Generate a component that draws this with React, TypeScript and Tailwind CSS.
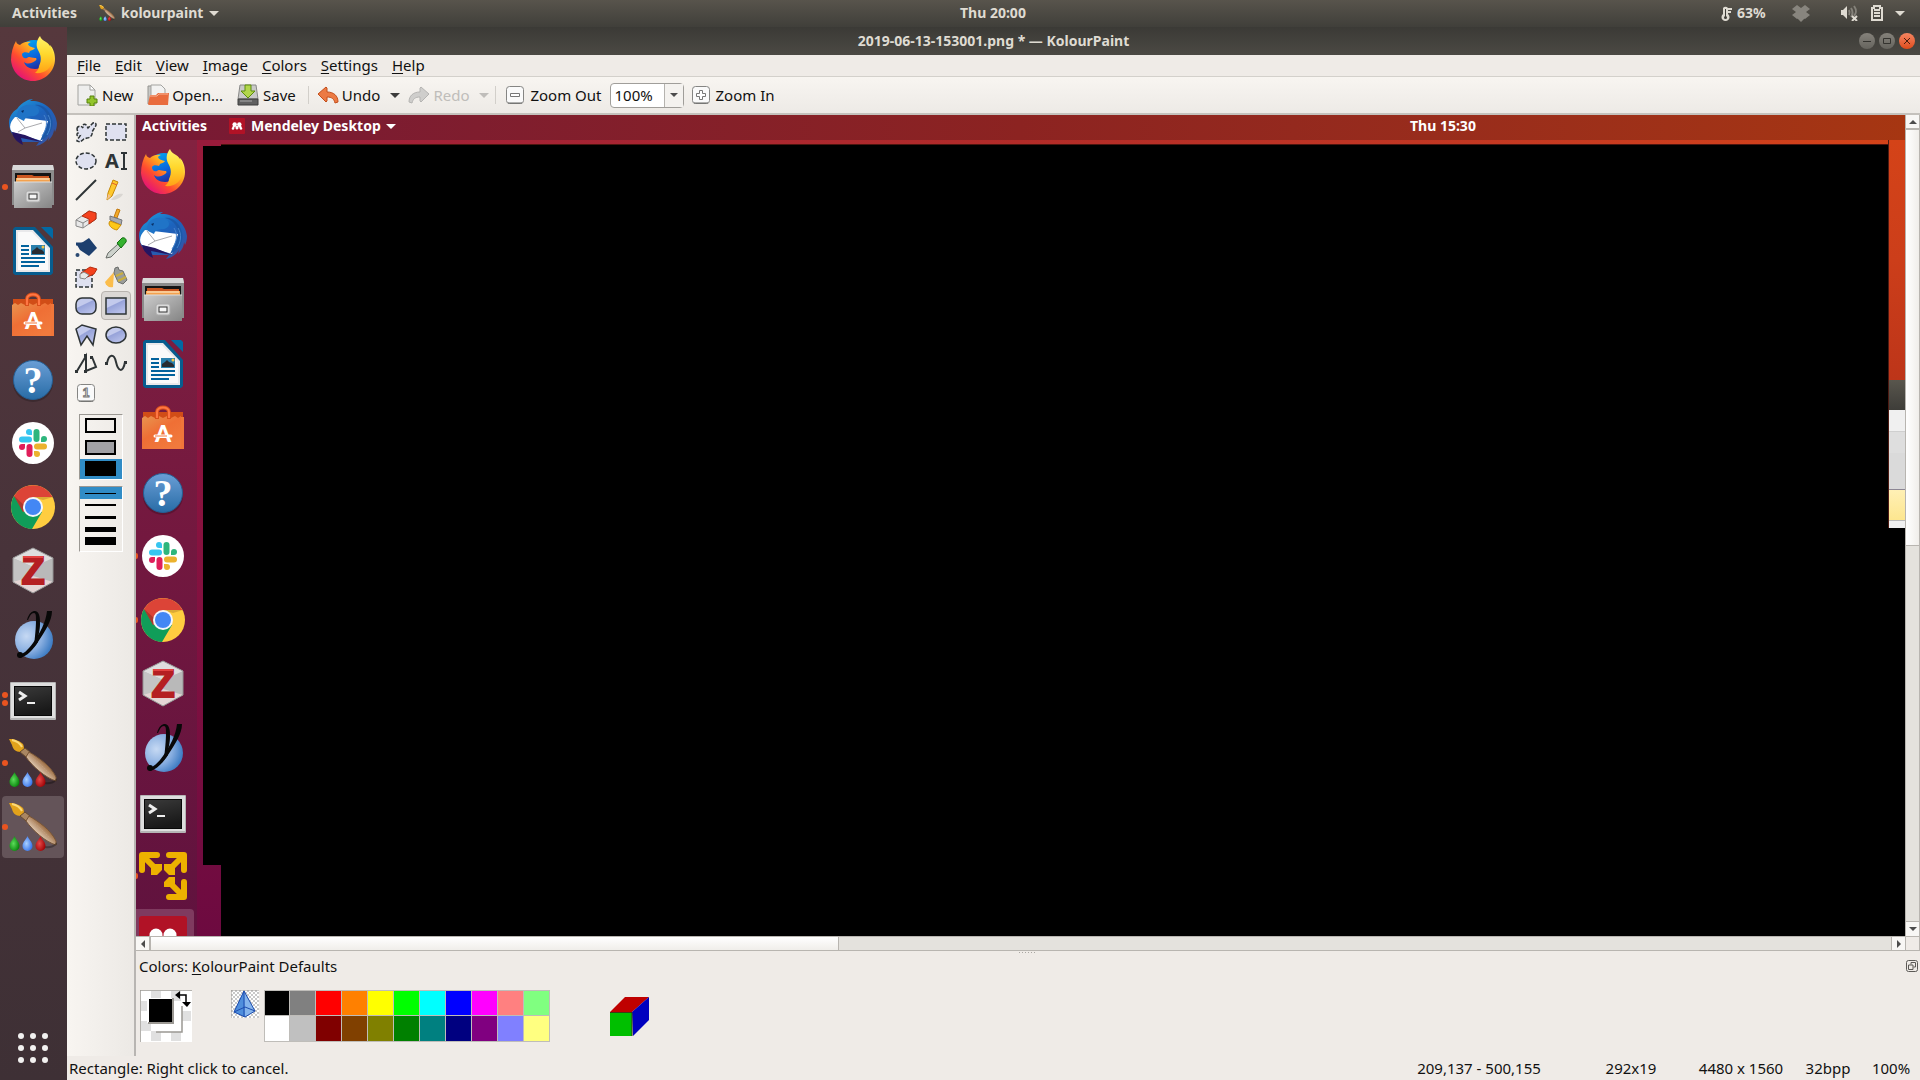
import React from 'react';

type IconProps = { className?: string };

const FirefoxIcon: React.FC<IconProps> = ({ className }) => (
  <svg viewBox="0 0 48 48" className={className}>
    <defs>
      <linearGradient id="ff-body" x1="0.85" y1="0.1" x2="0.15" y2="0.9">
        <stop offset="0" stopColor="#fff44f" />
        <stop offset="0.35" stopColor="#ffa51e" />
        <stop offset="0.65" stopColor="#ff4b30" />
        <stop offset="1" stopColor="#e3107a" />
      </linearGradient>
      <linearGradient id="ff-globe" x1="0" y1="0" x2="0.4" y2="1">
        <stop offset="0" stopColor="#00b3f4" />
        <stop offset="0.6" stopColor="#0a64dc" />
        <stop offset="1" stopColor="#28208f" />
      </linearGradient>
      <linearGradient id="ff-flame" x1="0" y1="0" x2="0" y2="1">
        <stop offset="0" stopColor="#fff36b" />
        <stop offset="0.5" stopColor="#ffd72c" />
        <stop offset="1" stopColor="#ffa116" />
      </linearGradient>
    </defs>
    <circle cx="25" cy="22" r="17" fill="url(#ff-globe)" />
    <path d="M7 6c-3 5-5 12-5 19 1 12 10 21 22 21s22-10 22-22c0-6-2-11-5-14 1 5 0 8-2 11 0 7-6 13-13 13-6 0-10-3-11-7 4 3 8 1 11-1 2-1 2-3 0-3-4 0-6-2-8 0-3 1-5-1-5-4 1-2 4-2 7-1l1-2c1-1 4-1 5-3-3-1-6-1-7-4 1-1 2-2 3-2-5-1-9 1-11 3-3-1-4-2-4-5z" fill="url(#ff-body)" />
    <path d="M31 1c-4 5-4 10-2 14 3 5 4 10 1 16 0 3-2 5-4 7 9 1 16-4 18-13 1-8-2-15-7-18-3-2-5-3-6-6z" fill="url(#ff-flame)" />
  </svg>
);

const ThunderbirdIcon: React.FC<IconProps> = ({ className }) => (
  <svg viewBox="0 0 48 48" className={className}>
    <defs>
      <linearGradient id="tb-wing" x1="0" y1="0" x2="0.7" y2="1">
        <stop offset="0" stopColor="#1fa0e0" />
        <stop offset="0.5" stopColor="#1c63bd" />
        <stop offset="1" stopColor="#3354a4" />
      </linearGradient>
    </defs>
    <path d="M8 10C13 3 20 0 24 0l-3 2c12-1 25 7 27 22 0 4-1 7-2 9l-1-3c0 5-3 9-6 12l1-4c-3 5-8 8-13 9l3-4H14C6 40 0 33 0 24c0-6 3-11 8-14z" fill="url(#tb-wing)" />
    <path d="M6 18 39 22 33 42 3 33C-1 28 2 22 6 18z" fill="#fff" />
    <path d="M3 33 16 36 33 43 12 39 14 46C8 43 4 39 3 33z" fill="#251561" />
    <path d="M8 19 16 29 33 24M16 29 9 33" fill="none" stroke="#a9a9ad" strokeWidth="1" />
    <path d="M8 17C8 9 16 3 26 7c7 3 4 10-2 10-4 0-8 1-9 5l-6-3z" fill="#2074c7" />
    <path d="M26 6c9 2 14 9 13 18l-8 18c10-5 14-13 12-22C40 10 33 5 26 6z" fill="#1b58a8" />
    <path d="M35 16c4 6 3 14-2 21M39 16c4 6 3 14-1 20" fill="none" stroke="#4684cd" strokeWidth="1" />
    <path d="m12 12 3-1-1 3z" fill="#082f65" />
  </svg>
);

const FilesIcon: React.FC<IconProps> = ({ className }) => (
  <svg viewBox="0 0 48 48" className={className}>
    <defs>
      <linearGradient id="files-front" x1="0" y1="0" x2="1" y2="1">
        <stop offset="0" stopColor="#cbcbcb" />
        <stop offset="1" stopColor="#858585" />
      </linearGradient>
    </defs>
    <path d="M4 2h40l1 4v36H3V6z" fill="#8c8c8c" />
    <path d="M4 2h40l1 5H3z" fill="#d9d9d9" />
    <path d="M6 10h36v10H6z" fill="#151515" />
    <path d="M8 12h15l2 1h15v6H8z" fill="#cb5720" />
    <path d="M7 15h34v5H7z" fill="#f3a14e" />
    <path d="M8 16h32" stroke="#fff3d9" strokeWidth="1" />
    <path d="M5 19h38v26H5z" fill="url(#files-front)" />
    <path d="M5 19h38" stroke="#dedede" />
    <rect x="17" y="28" width="14" height="11" rx="2" fill="#dadada" stroke="#aaa" />
    <rect x="20" y="31" width="8" height="5" fill="#f5f5f5" stroke="#333" />
  </svg>
);

const WriterIcon: React.FC<IconProps> = ({ className }) => (
  <svg viewBox="0 0 48 48" className={className}>
    <path d="M6 0h20l18 20v26l-2 2H6l-2-2V2z" fill="#075d8f" />
    <path d="M32 0h10l2 2v10z" fill="#0369a3" />
    <path d="M7 3h17l17 18v24H7z" fill="#e9e9eb" />
    <path d="M9 5h14l16 17v21H9z" fill="#fafafa" />
    <path d="M12 19h8M12 23h8M12 27h8M12 31h24M12 35h24M12 39h18" stroke="#03639d" strokeWidth="2" />
    <path d="M22 18h14v10H22z" fill="#2a80ad" />
    <path d="M23 27v-3l3-2 2-2 2 2 3 1 2 2v2z" fill="#282b30" />
    <circle cx="34" cy="20" r="1.5" fill="#f6c546" />
  </svg>
);

const SoftwareIcon: React.FC<IconProps> = ({ className }) => (
  <svg viewBox="0 0 48 48" className={className}>
    <defs>
      <linearGradient id="sw-bag" x1="0" y1="0" x2="0.7" y2="1">
        <stop offset="0" stopColor="#e89550" />
        <stop offset="0.5" stopColor="#ef6f35" />
        <stop offset="1" stopColor="#f17a3d" />
      </linearGradient>
    </defs>
    <path d="M4 8h40v8H4z" fill="#d14d17" />
    <path d="M3 14 6 12l3 2 3-2 4 2 4-2 4 2 4-2 4 2 4-2 3 2 3-2v33H3z" fill="url(#sw-bag)" />
    <path d="M42 13h3v32h-3z" fill="#f0763a" />
    <path d="M18 15V8c0-6 12-6 12 0v7" fill="none" stroke="#d94f1b" strokeWidth="4" />
    <path d="M18 14V8c0-6 12-6 12 0v6" fill="none" stroke="#ff7744" strokeWidth="2" />
    <text x="24" y="38" textAnchor="middle" fontFamily="Lato" fontWeight="900" fontSize="23" fill="#fff">A</text>
    <path d="M16 32h16" stroke="#fff" strokeWidth="3" strokeLinecap="round" />
    <path d="M16 32h12" stroke="#f37a3e" strokeWidth="1" />
  </svg>
);

const HelpIcon: React.FC<IconProps> = ({ className }) => (
  <svg viewBox="0 0 48 48" className={className}>
    <defs>
      <linearGradient id="help-disc" x1="0" y1="0" x2="0" y2="1">
        <stop offset="0" stopColor="#6a9ed6" />
        <stop offset="1" stopColor="#286ca6" />
      </linearGradient>
    </defs>
    <ellipse cx="24" cy="28" rx="20" ry="19" fill="#000" opacity="0.2" />
    <circle cx="24" cy="25" r="19.500" fill="url(#help-disc)" stroke="#255f94" />
    <text x="24" y="38" textAnchor="middle" fontFamily="Liberation Serif" fontWeight="700" fontSize="38" fill="#fff">?</text>
  </svg>
);

const SlackIcon: React.FC<IconProps> = ({ className }) => (
  <svg viewBox="0 0 48 48" className={className}>
    <circle cx="24" cy="24" r="21" fill="#fff" />
    <g strokeWidth="6" strokeLinecap="round">
      <path d="M13 20.500h7" stroke="#36c5f0" />
      <path d="M27.500 13v7" stroke="#2eb67d" />
      <path d="M28 27.500h7" stroke="#ecb22e" />
      <path d="M20.500 28v7" stroke="#e01e5a" />
    </g>
    <path d="M23 16h-3a3 3 0 1 1 3-3z" fill="#36c5f0" />
    <path d="M32 23v-3a3 3 0 1 1 3 3z" fill="#2eb67d" />
    <path d="M25 32h3a3 3 0 1 1-3 3z" fill="#ecb22e" />
    <path d="M16 25v3a3 3 0 1 1-3-3z" fill="#e01e5a" />
  </svg>
);

const ChromeIcon: React.FC<IconProps> = ({ className }) => (
  <svg viewBox="0 0 48 48" className={className}>
    <circle cx="24" cy="24" r="22" fill="#ffcd40" />
    <path d="M24 24 5 13a22 22 0 0 0 18 33l10-17z" fill="#109d59" />
    <path d="M24 24 14 29 5 13a22 22 0 0 1 38.500 1H24z" fill="#dc4437" />
    <path d="M24 14h20l-10 3z" fill="#b9892a" opacity="0.5" />
    <path d="m5 13 9 16 1-7z" fill="#7d2c22" opacity="0.5" />
    <circle cx="24" cy="24" r="10" fill="#f4f6fb" />
    <circle cx="24" cy="24" r="8" fill="#4387f4" />
  </svg>
);

const ZoteroIcon: React.FC<IconProps> = ({ className }) => (
  <svg viewBox="0 0 48 48" className={`overflow-visible ${className ?? ''}`}>
    <path d="m24 1 20 10v24L24 46 4 35V11z" fill="#b9b9b9" />
    <path d="m24 1 20 10-20 9L4 11z" fill="#dedede" />
    <path d="m4 11 20 9v26L4 35z" fill="#c4c4c4" />
    <path d="m24 46 20-11-20-6-20 6z" fill="#e5d5d5" />
    <path d="m24 1 20 10v24L24 46 4 35V11z" fill="none" stroke="#939393" />
    <text x="24" y="37" textAnchor="middle" fontFamily="Liberation Sans" fontWeight="700" fontSize="38" fill="#b51f22" stroke="#b51f22" strokeWidth="2">Z</text>
    <path d="M14 10h20" stroke="#e34342" strokeWidth="2" />
  </svg>
);

const YedIcon: React.FC<IconProps> = ({ className }) => (
  <svg viewBox="0 0 48 48" className={className}>
    <defs>
      <radialGradient id="yed-ball" cx="0.3" cy="0.4" r="0.7">
        <stop offset="0" stopColor="#c6d9f3" />
        <stop offset="0.6" stopColor="#88aee0" />
        <stop offset="1" stopColor="#3f7dc4" />
      </radialGradient>
    </defs>
    <circle cx="25" cy="29" r="19" fill="url(#yed-ball)" />
    <path d="M18 9c2-7 5-9 8-9 5 1 5 7 5 13 0 7-2 11-2 18l-4 5c1-11 2-19 2-27 0-4 0-7-2-7-3 0-4 3-6 7z" fill="#080808" />
    <path d="M38 0h5c0 10-7 20-14 31-5 8-11 14-18 16l-3-3c6 0 11-5 16-12 7-10 13-21 14-32z" fill="#080808" />
    <circle cx="11" cy="44" r="3" fill="#080808" />
  </svg>
);

const TerminalIcon: React.FC<IconProps> = ({ className }) => (
  <svg viewBox="0 0 48 48" className={className}>
    <defs>
      <linearGradient id="term-screen" x1="0" y1="0" x2="0.3" y2="1">
        <stop offset="0" stopColor="#3a3a3a" />
        <stop offset="1" stopColor="#191919" />
      </linearGradient>
    </defs>
    <rect x="1" y="7" width="46" height="38" rx="1" fill="#b5b5b5" />
    <rect x="2" y="8" width="44" height="35" fill="#dedede" />
    <rect x="5" y="11" width="38" height="30" fill="#080808" />
    <rect x="6" y="12" width="36" height="28" fill="url(#term-screen)" />
    <path d="m10 17 6 4-6 4" fill="none" stroke="#eee" strokeWidth="3" />
    <path d="M18 28h8" stroke="#eee" strokeWidth="2" />
  </svg>
);

const KolourIcon: React.FC<IconProps> = ({ className }) => (
  <svg viewBox="0 0 48 48" className={className}>
    <defs>
      <linearGradient id="kp-handle" x1="0" y1="1" x2="1" y2="0">
        <stop offset="0.3" stopColor="#f5e6d5" />
        <stop offset="0.6" stopColor="#a3764e" />
      </linearGradient>
      <radialGradient id="kp-green" cx="0.4" cy="0.5" r="0.6">
        <stop offset="0" stopColor="#5cdc59" />
        <stop offset="1" stopColor="#06820a" />
      </radialGradient>
      <radialGradient id="kp-blue" cx="0.4" cy="0.5" r="0.6">
        <stop offset="0" stopColor="#a9d0ff" />
        <stop offset="1" stopColor="#3572e9" />
      </radialGradient>
      <radialGradient id="kp-red" cx="0.4" cy="0.5" r="0.6">
        <stop offset="0" stopColor="#e54a48" />
        <stop offset="1" stopColor="#a00206" />
      </radialGradient>
    </defs>
    <path d="M0 0c6 0 11 2 14 5 1 2 1 4 1 6l-3 2C6 13 4 10 3 6z" fill="#e2a21b" />
    <path d="M3 1c5 1 8 3 10 7" stroke="#fbd977" strokeWidth="2" fill="none" />
    <path d="m11 13 5-4 5 4-4 5z" fill="#a98662" stroke="#654a30" strokeWidth="1" />
    <path d="M20 13c9 5 22 14 27 25l0 4c-10-3-23-14-30-24z" fill="url(#kp-handle)" stroke="#785536" strokeWidth="1" />
    <path d="M21 17c8 6 16 13 23 22" stroke="#c29e7c" strokeWidth="1" strokeDasharray="2 1" fill="none" />
    <path d="M36 44c5 1 10-1 12-4" stroke="#000" strokeWidth="2" opacity="0.3" fill="none" />
    <path d="M5.500 33c1 3 5 6 5 10a5 5 0 0 1-10 0c0-4 4-7 5-10z" fill="url(#kp-green)" />
    <path d="M18.500 33c1 3 5 6 5 10a5 5 0 0 1-10 0c0-4 4-7 5-10z" fill="url(#kp-blue)" />
    <path d="M31.500 33c1 3 5 6 5 10a5 5 0 0 1-10 0c0-4 4-7 5-10z" fill="url(#kp-red)" />
  </svg>
);

const ArrowsIcon: React.FC<IconProps> = ({ className }) => (
  <svg viewBox="0 0 48 48" className={className}>
    <g fill="none" stroke="#edb100" strokeWidth="6" strokeLinecap="round" strokeLinejoin="round">
      <path d="M3 18V3h15M30 3h15v15M45 30v15H30" />
    </g>
    <path d="m3 3 14 14M45 3 31 17M45 45 31 31" stroke="#edb100" strokeWidth="6" />
    <path d="M12 12h11v6l-5 5h-6zM25 12h11v11h-6l-5-5zM25 30l5-5h6v10H25z" fill="#edb100" />
  </svg>
);

const MendeleyIcon: React.FC<IconProps> = ({ className }) => (
  <svg viewBox="0 0 48 48" className={className}>
    <rect width="48" height="48" rx="3" fill="#b11226" />
    <circle cx="17" cy="19" r="6.500" fill="#fff" />
    <circle cx="31" cy="19" r="6.500" fill="#fff" />
    <path d="M8 33c0-4 3-4 3-8 0-3 2-6 5-6l8 6 8-6c3 0 5 3 5 6 0 4 3 4 3 8-2 3-7 3-8-1 0-3-1-4-2-6l-1-1-1 7c-1 3-7 3-8 0l-1-7-2 1c-1 2-1 3-1 6-1 4-7 4-8 1z" fill="#fff" />
  </svg>
);

type Launcher = { name: string; icon: React.FC<IconProps>; windows?: number; active?: boolean };

const launchers: Launcher[] = [
  { name: 'Firefox', icon: FirefoxIcon },
  { name: 'Thunderbird', icon: ThunderbirdIcon },
  { name: 'Files', icon: FilesIcon, windows: 1 },
  { name: 'LibreOffice Writer', icon: WriterIcon },
  { name: 'Ubuntu Software', icon: SoftwareIcon },
  { name: 'Help', icon: HelpIcon },
  { name: 'Slack', icon: SlackIcon },
  { name: 'Chrome', icon: ChromeIcon },
  { name: 'Zotero', icon: ZoteroIcon },
  { name: 'yEd', icon: YedIcon },
  { name: 'Terminal', icon: TerminalIcon, windows: 2 },
  { name: 'KolourPaint', icon: KolourIcon, windows: 1 },
  { name: 'KolourPaint window', icon: KolourIcon, windows: 1, active: true },
];

const paintedLaunchers: Launcher[] = [
  { name: 'Firefox', icon: FirefoxIcon },
  { name: 'Thunderbird', icon: ThunderbirdIcon },
  { name: 'Files', icon: FilesIcon },
  { name: 'LibreOffice Writer', icon: WriterIcon },
  { name: 'Ubuntu Software', icon: SoftwareIcon },
  { name: 'Help', icon: HelpIcon },
  { name: 'Slack', icon: SlackIcon, windows: 1 },
  { name: 'Chrome', icon: ChromeIcon, windows: 1 },
  { name: 'Zotero', icon: ZoteroIcon },
  { name: 'yEd', icon: YedIcon },
  { name: 'Terminal', icon: TerminalIcon },
  { name: 'Arrows', icon: ArrowsIcon, windows: 1 },
  { name: 'Mendeley', icon: MendeleyIcon, active: true },
];

const Caret: React.FC<IconProps> = ({ className }) => (
  <svg viewBox="0 0 10 5" className={`h-[5px] w-[10px] shrink-0 ${className ?? ''}`}>
    <path d="M0 0h10L5 5z" fill="currentColor" />
  </svg>
);

const TopBar = () => (
  <header className="grid h-[27px] shrink-0 grid-cols-[50%_1fr_auto] items-center bg-linear-to-b from-[#58544c] to-[#403f3a] pb-px text-sm font-bold text-[#dfdbd2]">
    <div className="flex items-center pl-3">
      <button className="w-[87px] text-left">Activities</button>
      <button className="flex items-center gap-[6px]">
        <KolourIcon className="h-4 w-4" />
        kolourpaint
        <Caret />
      </button>
    </div>
    <button className="justify-self-start">Thu 20:00</button>
    <div className="flex items-center pr-[15px]">
      <svg viewBox="0 0 12 17" className="mr-1 h-[17px] w-3">
        <path d="M2 3a3 3 0 0 1 5 0v6a4 4 0 1 1-5 0z" fill="#dfdbd2" />
        <path d="M4.500 4v9" stroke="#403f3a" strokeWidth="1" />
        <circle cx="4.500" cy="12.500" r="1.500" fill="#403f3a" />
        <path d="M7 4h4M7 7h3" stroke="#dfdbd2" strokeWidth="2" />
      </svg>
      <span className="w-[55px]">63%</span>
      <svg viewBox="0 0 18 17" className="mr-[30px] h-[17px] w-[18px]">
        <path d="M5 0 9 3 4 7 0 4zM13 0l5 4-4 3-5-4zM4 7l5 4-4 3-5-4zM14 7l4 3-5 4-4-3zM9 3l5 4-5 4-5-4zM5 13l4-2 4 2-4 4z" fill="#88857e" />
      </svg>
      <svg viewBox="0 0 18 16" className="mr-[13px] h-4 w-[18px]">
        <path d="M1 5h2l4-4v13l-4-4H1z" fill="#dfdbd2" />
        <path d="M9 5c1 2 1 3 0 5M11 3c2 3 2 6 0 9M14 1c3 4 2 8 0 10" fill="none" stroke="#85827a" strokeWidth="2" />
        <path d="m12 11 5 5M17 11l-5 5" stroke="#dfdbd2" strokeWidth="2" />
      </svg>
      <svg viewBox="0 0 12 16" className="mr-3 h-4 w-3">
        <path d="M3 1h6v2h2v12H1V3h2z" fill="none" stroke="#dfdbd2" strokeWidth="2" />
        <path d="M3 5h6M3 8h6M3 11h6" stroke="#dfdbd2" strokeWidth="2" />
      </svg>
      <Caret />
    </div>
  </header>
);

const Dock = () => (
  <nav aria-label="Dock" className="flex w-[67px] shrink-0 flex-col bg-linear-to-b from-[#56383d] via-[#48333a] to-[#3e3035]">
    {launchers.map(({ name, icon: Icon, windows = 0, active }) => (
      <button key={name} aria-label={name} className="flex h-16 w-full items-center py-px pr-[3px] pl-[2px]">
        <span className={`flex h-full w-full items-center rounded-sm ${active ? 'bg-[#645459]' : ''}`}>
          <span className="flex w-[7px] flex-col items-start gap-[2px]">
            {Array.from({ length: windows }, (_, i) => (
              <span key={i} className="h-[6px] w-[6px] rounded-full bg-[#e95420]" />
            ))}
          </span>
          <Icon className="h-12 w-12" />
        </span>
      </button>
    ))}
    <button aria-label="Show applications" className="mt-auto flex h-16 w-full justify-center pr-px">
      <svg viewBox="0 0 32 32" className="mt-4 h-8 w-8">
        {[4, 16, 28].map((y) => [4, 16, 28].map((x) => <circle key={`${x}-${y}`} cx={x} cy={y} r="3" fill="#f2f1f0" />))}
      </svg>
    </button>
  </nav>
);

const TitleBar = () => (
  <div className="grid h-7 shrink-0 grid-cols-[1fr_auto_1fr] items-center bg-linear-to-b from-[#3b3a36] to-[#4b4944] text-sm font-bold text-[#dfdbd2]">
    <h1 className="col-start-2">2019-06-13-153001.png * — KolourPaint</h1>
    <div className="flex justify-end gap-1 pr-[5px]">
      <button aria-label="Minimize" className="h-4 w-4 rounded-full bg-linear-to-b from-[#85827b] to-[#66645e] text-[#34332f]">
        <svg viewBox="0 0 16 16"><path d="M4 8.500h8" stroke="currentColor" /></svg>
      </button>
      <button aria-label="Maximize" className="h-4 w-4 rounded-full bg-linear-to-b from-[#85827b] to-[#66645e] text-[#34332f]">
        <svg viewBox="0 0 16 16"><path d="M4.500 5.500h7v5h-7z" fill="none" stroke="currentColor" /></svg>
      </button>
      <button aria-label="Close" className="h-4 w-4 rounded-full bg-linear-to-b from-[#f58560] to-[#df4a16] text-[#4a1d0c]">
        <svg viewBox="0 0 16 16"><path d="m5 5 6 6M11 5l-6 6" stroke="currentColor" /></svg>
      </button>
    </div>
  </div>
);

const MenuBar = () => (
  <nav aria-label="Menu" className="flex h-[22px] shrink-0 items-center gap-[14px] border-b border-[#d3d0cb] bg-[#efebe7] pb-px pl-[10px] text-[15px] leading-5">
    {['File', 'Edit', 'View', 'Image', 'Colors', 'Settings', 'Help'].map((item) => (
      <button key={item}>
        <span className="underline decoration-1 underline-offset-2">{item[0]}</span>
        {item.slice(1)}
      </button>
    ))}
  </nav>
);

const NewIcon = () => (
  <svg viewBox="0 0 22 22" className="h-[22px] w-[22px]">
    <path d="M1 1h12l5 5v15H1z" fill="#eeeeed" stroke="#a2a29f" />
    <path d="M13 1v5h5z" fill="#fff" stroke="#a2a29f" />
    <path d="M13 12h4v3h3v4h-3v3h-4v-3h-3v-4h3z" fill="#93c52c" stroke="#56820c" />
  </svg>
);

const OpenIcon = () => (
  <svg viewBox="0 0 22 22" className="h-[22px] w-[22px]">
    <path d="M1 2h5l1 2v16H1z" fill="#c8c8c5" stroke="#949491" />
    <path d="M4 1h10l4 4v8H4z" fill="#f2f2f1" stroke="#a3a3a0" />
    <path d="M1 20 3 11h6l2-2h11l-1 12H2z" fill="#e96c3e" />
    <path d="M3 12h7l2-2h9" fill="none" stroke="#f7b496" />
  </svg>
);

const SaveIcon = () => (
  <svg viewBox="0 0 22 22" className="h-[22px] w-[22px]">
    <path d="M3 1h16l2 14H1z" fill="#c9c9c8" stroke="#898988" />
    <path d="M1 15h20v6H1z" fill="#606060" stroke="#3c3c3c" />
    <path d="M3 17h12" stroke="#aaa" />
    <path d="M8 1h6v6h4l-7 7-7-7h4z" fill="#b2d64b" stroke="#5c8c0f" />
  </svg>
);

const TurnIcon: React.FC<{ fill: string; stroke: string; className?: string }> = ({ fill, stroke, className }) => (
  <svg viewBox="0 0 22 18" className={`h-[18px] w-[22px] ${className ?? ''}`}>
    <path d="M1 8 9 1l1 1v4c7 0 11 4 11 10l-3 1c-1-4-3-6-8-6v4l-1 1z" fill={fill} stroke={stroke} strokeLinejoin="round" />
  </svg>
);

const ZoomIcon: React.FC<{ plus?: boolean }> = ({ plus }) => (
  <svg viewBox="0 0 18 18" className="h-[18px] w-[18px]">
    <rect x="0.500" y="0.500" width="17" height="17" rx="3" fill="#fafafa" stroke="#858583" />
    <path d="M2 17h14" stroke="#696967" />
    {plus ? (
      <path d="M7.500 4.500h3v3h3v3h-3v3h-3v-3h-3v-3h3z" fill="#fff" stroke="#777" />
    ) : (
      <path d="M4.500 7.500h9v3h-9z" fill="#fff" stroke="#777" />
    )}
  </svg>
);

const ToolBar = () => (
  <div className="flex h-[38px] shrink-0 items-center border-b-2 border-[#c4c1bc] bg-linear-to-b from-[#f8f5f1] to-[#edeae6] pl-[10px] text-[15px] leading-5">
    <button className="mr-[14px] flex items-center gap-[3px]"><NewIcon />New</button>
    <button className="mr-[14px] flex items-center gap-[3px]"><OpenIcon />Open...</button>
    <button className="mr-3 flex items-center gap-1"><SaveIcon />Save</button>
    <span className="mr-2 h-[18px] w-px bg-[#d2cfca]" />
    <button className="flex items-center gap-[3px]"><TurnIcon fill="#ec7a43" stroke="#c34e1b" />Undo</button>
    <button aria-label="Undo history" className="mr-2 ml-[10px] text-[#3c3c3c]"><Caret /></button>
    <button disabled className="flex items-center gap-[3px] text-[#bfbdba]"><TurnIcon fill="#cfcecc" stroke="#b5b4b2" className="-scale-x-100" />Redo</button>
    <button disabled aria-label="Redo history" className="mr-[6px] ml-[10px] text-[#bfbdba]"><Caret /></button>
    <span className="mr-[10px] h-[18px] w-px bg-[#d2cfca]" />
    <button className="mr-2 flex items-center gap-[6px]"><ZoomIcon />Zoom Out</button>
    <div className="mr-2 flex h-[25px] w-[74px] items-center rounded-sm border border-[#a09e9a] bg-white">
      <select aria-label="Zoom" className="w-[53px] appearance-none pl-1 outline-none" defaultValue="100%">
        <option>100%</option>
      </select>
      <span className="flex h-full flex-1 items-center justify-center border-l border-[#b5b3af] bg-[#f4f2ef] text-[#4c4c4c]">
        <svg viewBox="0 0 8 4" className="h-1 w-2"><path d="M0 0h8L4 4z" fill="currentColor" /></svg>
      </span>
    </div>
    <button className="flex items-center gap-[6px]"><ZoomIcon plus />Zoom In</button>
  </div>
);

const ink = '#2e3436';

const tools: { name: string; art: React.ReactNode }[] = [
  {
    name: 'Free-form selection',
    art: <path d="M2 8c0-3 4-4 6-1-1-4 2-5 4-2l1 2 5-5c3-1 4 2 2 4l-3 5c1 3-2 6-5 6l-3 1-4 3-3-1c0-2 2-3 3-5-3 1-4-2-2-3z" fill="#dfe1f0" stroke={ink} strokeWidth="1.500" strokeDasharray="4 1.500" />,
  },
  { name: 'Rectangular selection', art: <path d="M1 3h20v16H1z" fill="#dfe1f0" stroke={ink} strokeWidth="1.500" strokeDasharray="4 2" /> },
  { name: 'Elliptical selection', art: <ellipse cx="11" cy="11" rx="10" ry="8" fill="#dfe1f0" stroke={ink} strokeWidth="1.500" strokeDasharray="4 2" /> },
  {
    name: 'Text',
    art: (
      <>
        <text x="0" y="18" fontFamily="Noto Sans" fontWeight="700" fontSize="20" fill={ink}>A</text>
        <path d="M16 3h6M16 19h6M19 3v16" stroke={ink} strokeWidth="2" />
      </>
    ),
  },
  { name: 'Line', art: <path d="M1 21 21 1" stroke={ink} strokeWidth="2" /> },
  {
    name: 'Pen',
    art: (
      <>
        <path d="M6 21c5 0 10-2 12-6-5-1-9 2-12 6z" fill="#d9d6d2" />
        <path d="m8 1 5 2-6 14-5 4 1-7z" fill="#fec82c" stroke="#c48708" />
        <path d="m2 21 1-6 3 2z" fill="#f4c28f" />
        <path d="m7 4 5 2" stroke="#e05e2f" />
      </>
    ),
  },
  {
    name: 'Eraser',
    art: (
      <>
        <path d="M1 12 14 3l7 2v6L8 20 1 18z" fill="#e8e8e8" stroke="#888" />
        <path d="m7 8 7-5 7 2v6l-7 5v-5z" fill="#f4421e" stroke="#b62d0f" />
        <path d="m1 12 7 3v5M8 15l5-3" fill="none" stroke="#888" />
      </>
    ),
  },
  {
    name: 'Brush',
    art: (
      <>
        <path d="m12 1 3 1-3 8-3-1z" fill="#f3aa28" stroke="#c17810" />
        <path d="m5 8 12 4-1 5-11-5z" fill="#a9abb0" stroke="#74767b" />
        <path d="m5 13 11 4-4 5C7 21 4 18 4 15z" fill="#fdc817" stroke="#cc8f06" />
      </>
    ),
  },
  {
    name: 'Flood fill',
    art: (
      <>
        <path d="m2 8 6-3 6-4 8 10-8 8-9-6z" fill="#1d3f6e" />
        <path d="M1 7h8" stroke="#1d3f6e" strokeWidth="3" />
        <circle cx="2.500" cy="18" r="2" fill="#2b4a72" />
      </>
    ),
  },
  {
    name: 'Color picker',
    art: (
      <>
        <path d="m1 21 2-5L13 7l3 3L6 20z" fill="#cdd2cc" stroke="#686d68" />
        <path d="m12 6 5-5c3-1 5 2 4 4l-5 6z" fill="#35b22f" stroke="#126d10" />
      </>
    ),
  },
  {
    name: 'Color eraser',
    art: (
      <>
        <path d="M1 4h16v17H1z" fill="#dfe1f0" stroke={ink} strokeWidth="1.500" strokeDasharray="4 2" />
        <path d="M6 7 15 1l7 2-3 5-9 4-4-1z" fill="#f4421e" stroke="#b62d0f" />
        <path d="m5 8 4-2 5 3-4 4-5-1z" fill="#e8e8e8" stroke="#888" />
      </>
    ),
  },
  {
    name: 'Spray can',
    art: (
      <>
        <path d="M9 6 0 16c1 4 4 6 8 5z" fill="#fbbd4b" />
        <path d="m10 2 3-1 1 3 4 1 4 9-4 4-5-2-4-9z" fill="#9a9c9a" stroke="#6c6e6c" />
        <path d="m11 10 7-3M13 15l8-4" stroke="#c9ae3e" strokeWidth="2" />
      </>
    ),
  },
  { name: 'Rounded rectangle', art: <rect x="1" y="3" width="20" height="16" rx="6" fill="url(#shape-fill)" stroke={ink} strokeWidth="1.500" /> },
  { name: 'Rectangle', art: <rect x="1" y="3" width="20" height="16" fill="url(#shape-fill)" stroke={ink} strokeWidth="1.500" /> },
  { name: 'Polygon', art: <path d="m1 5 6-4 14 4-3 16-6-9-6 9z" fill="url(#shape-fill)" stroke={ink} strokeWidth="1.500" /> },
  { name: 'Ellipse', art: <ellipse cx="11" cy="11" rx="10" ry="8" fill="url(#shape-fill)" stroke={ink} strokeWidth="1.500" /> },
  {
    name: 'Connected lines',
    art: (
      <>
        <path d="m2 18 9-15v15l10-4-4-10" fill="none" stroke={ink} strokeWidth="2" />
        <path d="M0 17h3v3H0zM9 1h3v3H9zM9 17h3v3H9zM15 3h3v3h-3z" fill={ink} />
      </>
    ),
  },
  {
    name: 'Curve',
    art: (
      <>
        <path d="M2 10c2-9 7-10 9-1s7 12 9 0" fill="none" stroke={ink} strokeWidth="2" />
        <path d="M0 9h3v3H0zM19 8h3v3h-3z" fill={ink} />
      </>
    ),
  },
];

const lineWidths = ['h-px', 'h-[2px]', 'h-[3px]', 'h-[5px]', 'h-2'];

const ToolBox = () => (
  <aside className="flex w-[69px] shrink-0 flex-col border-r-2 border-[#b8b5b2] bg-linear-to-r from-[#f8f5f1] to-[#ece9e5] pt-[2px] pl-1">
    <svg className="h-0 w-0">
      <linearGradient id="shape-fill" x1="0" y1="0" x2="0.6" y2="1">
        <stop offset="0.45" stopColor="#c3caec" />
        <stop offset="0.5" stopColor="#97a3d9" />
        <stop offset="1" stopColor="#b9c1ea" />
      </linearGradient>
    </svg>
    <div className="grid grid-cols-[30px_30px]">
      {tools.map(({ name, art }) => (
        <button
          key={name}
          aria-label={name}
          className={`flex h-[29px] items-center justify-center ${name === 'Rectangle' ? 'rounded-sm border border-[#b7b3ae] bg-[#dbd8d5]' : ''}`}
        >
          <svg viewBox="0 0 22 22" className="h-[22px] w-[22px] shrink-0 overflow-visible" fill="none">{art}</svg>
        </button>
      ))}
      <button aria-label="Zoom 1:1" className="flex h-[29px] items-center justify-center">
        <svg viewBox="0 0 18 18" className="h-[18px] w-[18px]">
          <rect x="0.500" y="0.500" width="17" height="17" rx="3" fill="#fafafa" stroke="#858583" />
          <path d="M2 17h14" stroke="#696967" />
          <text x="9" y="13" textAnchor="middle" fontFamily="Liberation Sans" fontWeight="700" fontSize="12" fill="#fff" stroke="#777">1</text>
        </svg>
      </button>
    </div>
    <div className="mt-[7px] ml-2 w-11 border border-t-[#9b9893] border-r-white border-b-white border-l-[#9b9893]">
      <button aria-label="No fill" className="flex h-[22px] w-full pt-[3px] pl-[5px]"><span className="h-[15px] w-[31px] border-2 border-black" /></button>
      <button aria-label="Background fill" className="flex h-[22px] w-full pt-[3px] pl-[5px]"><span className="h-[15px] w-[31px] border-2 border-black bg-[#a0a0a4]" /></button>
      <button aria-label="Foreground fill" className="flex h-5 w-full bg-[#308cc6] pt-[2px] pl-[5px]"><span className="h-[15px] w-[31px] bg-black" /></button>
    </div>
    <div className="mt-[6px] ml-2 w-11 border border-t-[#9b9893] border-r-white border-b-white border-l-[#9b9893] pb-1">
      {lineWidths.map((height, i) => (
        <button
          key={height}
          aria-label={`Line width ${i + 1}`}
          className={`flex h-3 w-full items-center pl-[5px] ${i === 0 ? 'bg-[#308cc6]' : ''}`}
        >
          <span className={`w-[31px] bg-black ${height}`} />
        </button>
      ))}
    </div>
  </aside>
);

/* The desktop screenshot that is open for editing, with most of it blacked out */
const Picture = () => (
  <div className="flex min-h-0 min-w-0 flex-1 flex-col overflow-hidden">
    <div className="flex h-[25px] shrink-0 items-center bg-linear-to-r from-[#771934] via-[#8c2321] to-[#a63612] pb-[3px] text-sm font-bold text-white">
      <div className="flex w-[1274px] shrink-0 items-center pl-[6px]">
        <span className="w-[87px]">Activities</span>
        <MendeleyIcon className="mr-[6px] h-4 w-4" />
        <span className="mr-[5px]">Mendeley Desktop</span>
        <Caret />
      </div>
      <span>Thu 15:30</span>
    </div>
    <div className="flex min-h-0 flex-1 bg-linear-to-r from-[#991b3b] via-[#b22b28] to-[#d44318]">
      <div className="flex w-[61px] shrink-0 flex-col overflow-hidden bg-linear-to-b from-[#832240] via-[#73183f] to-[#60123e]">
        {paintedLaunchers.map(({ name, icon: Icon, windows = 0, active }) => (
          <div key={name} className="h-16 w-full shrink-0 py-px pr-[3px]">
            <div className={`flex h-full items-center rounded-r-sm ${active ? 'bg-[#7f3a5f]' : ''}`}>
              <span className={`mr-px h-[6px] w-[2px] rounded-r-full ${windows > 0 ? 'bg-[#e95420]' : ''}`} />
              <Icon className="h-12 w-12 shrink-0" />
            </div>
          </div>
        ))}
      </div>
      <div className="flex w-6 shrink-0 flex-col bg-linear-to-b from-[#991b3b] via-[#87123f] to-[#6d0a40]">
        <div className="mt-[6px] ml-[6px] flex-1 bg-black" />
        <div className="h-[71px]" />
      </div>
      <div className="mt-1 flex-1 border-t border-[#4d150f] bg-black" />
      <div className="w-[17px] shrink-0 bg-black">
        <div className="border-l border-[#4d1a12]">
          <div className="h-[240px] bg-linear-to-b from-[#d44318] via-[#cc3e1a] to-[#bd3519]" />
          <div className="h-[30px] bg-linear-to-b from-[#59564d] to-[#3e3d39]" />
          <div className="h-[21px] bg-[#f0f0f0]" />
          <div className="h-[22px] border-t border-[#cfcfcf] bg-[#dedede]" />
          <div className="h-9 bg-[#dadada]" />
          <div className="h-8 border-t border-b border-t-[#8c8694] border-b-[#b9b9b9] bg-linear-to-b from-[#fff0b5] to-[#fde68f]" />
          <div className="h-[7px] bg-[#f0f0f0]" />
        </div>
      </div>
    </div>
  </div>
);

const ScrollArrow: React.FC<{ label: string; d: string; className: string }> = ({ label, d, className }) => (
  <button aria-label={label} className={`flex shrink-0 items-center justify-center border-[#b8b5b0] bg-[#f8f7f5] ${className}`}>
    <svg viewBox="0 0 8 8" className="h-2 w-2"><path d={d} fill="#4c4c4c" /></svg>
  </button>
);

const CanvasArea = () => (
  <div className="flex min-h-0 flex-1 flex-col">
    <div className="flex min-h-0 flex-1">
      <Picture />
      <div className="flex w-[15px] shrink-0 flex-col border-r border-l border-[#b8b5b0] bg-[#e4e2dd]">
        <ScrollArrow label="Scroll up" d="M0 6h8L4 2z" className="h-[15px] border-b-2" />
        <div className="h-[50.7%] border-b border-[#b8b5b0] bg-linear-to-r from-white to-[#f0eeea]" />
        <ScrollArrow label="Scroll down" d="M0 2h8L4 6z" className="mt-auto h-[15px] border-t" />
      </div>
    </div>
    <div className="flex h-[15px] shrink-0 border-t border-b border-[#b8b5b0]">
      <div className="flex flex-1 bg-[#e4e2dd]">
        <ScrollArrow label="Scroll left" d="M6 0v8L2 4z" className="w-[15px] border-r-2" />
        <div className="w-[38.9%] border-r border-[#b8b5b0] bg-linear-to-b from-white to-[#f0eeea]" />
        <ScrollArrow label="Scroll right" d="M2 0v8l4-4z" className="ml-auto w-[14px] border-l" />
      </div>
      <div className="w-[15px] border-r border-l border-[#b8b5b0] bg-[#efebe7]" />
    </div>
  </div>
);

const palette = [
  '#000000', '#808080', '#ff0000', '#ff8000', '#ffff00', '#00ff00', '#00ffff', '#0000ff', '#ff00ff', '#ff8080', '#80ff80',
  '#ffffff', '#c0c0c0', '#800000', '#804000', '#808000', '#008000', '#008080', '#000080', '#800080', '#8080ff', '#ffff80',
];

const ColorPanel = () => (
  <section className="h-[105px] shrink-0 bg-[#efebe7]">
    <div className="flex h-[3px] justify-center text-[#aaa7a2]">
      <svg viewBox="0 0 18 3" className="h-[3px] w-[18px]"><path d="M0 1.500h18" stroke="currentColor" strokeDasharray="1 2" /></svg>
    </div>
    <div className="flex h-6 items-center justify-between pr-[2px] pl-[3px] text-[15px] leading-5">
      <h2>Colors: <span className="underline decoration-1 underline-offset-2">K</span>olourPaint Defaults</h2>
      <button aria-label="Float panel">
        <svg viewBox="0 0 12 12" className="h-3 w-3" fill="none" stroke="#5c5a57">
          <rect x="0.500" y="0.500" width="11" height="11" rx="2" />
          <path d="M5 4.500V2.500h4.500v4.500h-2M2.500 5h4.500v4.500H2.500z" />
        </svg>
      </button>
    </div>
    <div className="flex items-start pt-3 pl-1">
      <button aria-label="Foreground and background color" className="mr-[39px] h-[52px] w-[52px]">
        <svg viewBox="0 0 52 52">
          <path d="M0 0h52v52H0z" fill="#fff" />
          <path d="M11 1h10v10H11zM31 1h10v10H31zM1 11h10v10H1zM41 21h10v10H41zM1 31h10v10H1zM11 41h10v10H11zM31 41h10v10H31z" fill="#e0e0e0" />
          <path d="M16 16h26v26H16z" fill="#fff" />
          <path d="M42 16v26H16" fill="none" stroke="#9b9893" strokeWidth="1.500" />
          <path d="M7 8h26v25H7z" fill="#fff" />
          <path d="M9 9h23v23H9z" fill="#000" />
          <path d="M33 8v25H8" fill="none" stroke="#9b9893" strokeWidth="2" />
          <path d="M0 52V0h52" fill="none" stroke="#9b9893" strokeWidth="1.500" />
          <path d="M38 5h8v10" fill="none" stroke="#000" strokeWidth="1.500" />
          <path d="m35 5 5-4v8zM42 12h9l-4 5z" fill="#000" />
        </svg>
      </button>
      <button aria-label="Transparent" className="mr-[5px] h-7 w-7">
        <svg viewBox="0 0 28 28">
          <defs>
            <pattern id="checker" width="4" height="4" patternUnits="userSpaceOnUse">
              <path d="M0 0h4v4H0z" fill="#fff" />
              <path d="M0 0h2v2H0zM2 2h2v2H2z" fill="#c9c9c9" />
            </pattern>
          </defs>
          <path d="M0 0h28v28H0z" fill="url(#checker)" />
          <path d="M0 28V0h28" fill="none" stroke="#9b9893" />
          <path d="M13 1 24 21 14 27 3 22z" fill="#85b4ec" />
          <path d="M13 1 14 27 3 22z" fill="#4f8edc" />
          <path d="M13 1 24 21 14 27 3 22zM13 1v26M3 22l11-5 10 4" fill="none" stroke="#1b4bae" />
        </svg>
      </button>
      <div className="mr-[60px] grid grid-cols-[24px_repeat(10,25px)] grid-rows-[24px_25px] gap-px border border-[#bfbdb9] bg-[#bfbdb9]">
        {palette.map((color) => (
          <button key={color} aria-label={color} className="h-full" style={{ backgroundColor: color }} />
        ))}
      </div>
      <svg viewBox="0 0 39 39" className="mt-[7px] h-[39px] w-[39px]">
        <path d="M0 15 15 0h24L22 15z" fill="#bf0000" />
        <path d="M0 16h22v23H0z" fill="#00bf00" />
        <path d="M22 15 39 0v23L23 39z" fill="#0000bf" />
        <path d="M0 15.500h22V39" fill="none" stroke="#3c3c14" strokeWidth="1" />
      </svg>
    </div>
  </section>
);

const StatusBar = () => (
  <footer className="flex h-6 shrink-0 items-center bg-[#efebe7] pr-[5px] pb-px pl-[2px] text-center text-[15px] leading-5">
    <span className="flex-1 text-left">Rectangle: Right click to cancel.</span>
    <span className="w-[180px]">209,137 - 500,155</span>
    <span className="w-[124px]">292x19</span>
    <span className="w-24">4480 x 1560</span>
    <span className="w-[78px]">32bpp</span>
    <span className="w-12">100%</span>
  </footer>
);

const App: React.FC = () => {
  return (
    <div className="flex h-screen flex-col overflow-hidden bg-[#efebe7] font-['Noto_Sans',sans-serif] text-[#111]">
      <TopBar />
      <div className="flex min-h-0 flex-1">
        <Dock />
        <main className="flex min-w-0 flex-1 flex-col">
          <TitleBar />
          <MenuBar />
          <ToolBar />
          <div className="flex min-h-0 flex-1">
            <ToolBox />
            <div className="flex min-w-0 flex-1 flex-col">
              <CanvasArea />
              <ColorPanel />
            </div>
          </div>
          <StatusBar />
        </main>
      </div>
    </div>
  );
};

export default App;
